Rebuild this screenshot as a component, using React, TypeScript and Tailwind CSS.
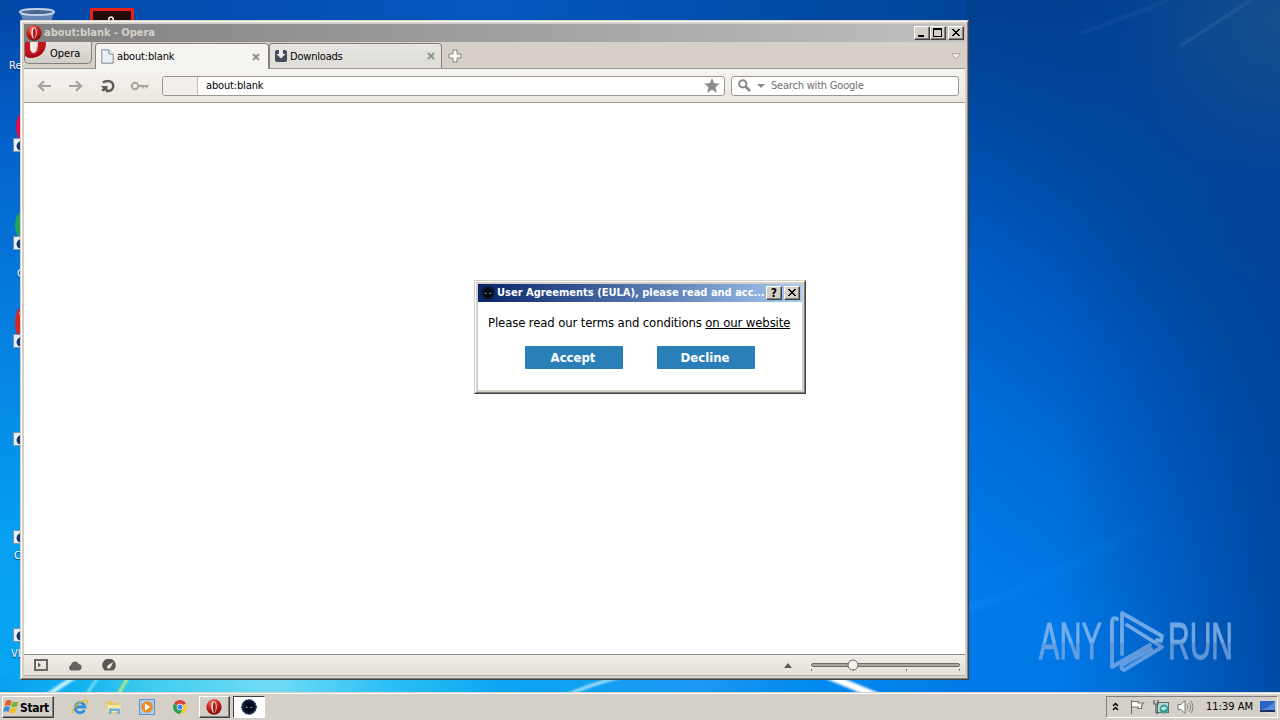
import React from 'react';

const ui = "font-['DejaVu_Sans_Condensed','DejaVu_Sans',sans-serif] [font-stretch:condensed]";

function Wallpaper() {
  return (
    <svg className="absolute inset-0" width="1280" height="720" viewBox="0 0 1280 720">
      <defs>
        <linearGradient id="base" x1="0" y1="0" x2="0" y2="1">
          <stop offset="0" stopColor="#0345a5" />
          <stop offset=".2" stopColor="#0462cc" />
          <stop offset=".5" stopColor="#0584e4" />
          <stop offset=".75" stopColor="#05a0f0" />
          <stop offset="1" stopColor="#08a8f4" />
        </linearGradient>
        <linearGradient id="right" gradientUnits="userSpaceOnUse" x1="968" y1="560" x2="1270" y2="160">
          <stop offset="0" stopColor="#0079e9" />
          <stop offset=".25" stopColor="#006cda" />
          <stop offset=".5" stopColor="#005ac2" />
          <stop offset=".8" stopColor="#00469b" />
          <stop offset="1" stopColor="#003c85" />
        </linearGradient>
        <linearGradient id="topshade" x1="0" y1="0" x2="0" y2="1">
          <stop offset="0" stopColor="#003f8f" stopOpacity=".9" />
          <stop offset=".4" stopColor="#0048a0" stopOpacity=".5" />
          <stop offset="1" stopColor="#0058b8" stopOpacity="0" />
        </linearGradient>
        <linearGradient id="edge" x1="0" y1="0" x2="1" y2="0">
          <stop offset="0" stopColor="#004a9e" stopOpacity="0" />
          <stop offset="1" stopColor="#00449c" stopOpacity=".85" />
        </linearGradient>
        <radialGradient id="corner" gradientUnits="userSpaceOnUse" cx="1280" cy="20" r="170">
          <stop offset="0" stopColor="#1b5188" stopOpacity=".8" />
          <stop offset="1" stopColor="#1b5188" stopOpacity="0" />
        </radialGradient>
        <linearGradient id="topbar" x1="0" y1="0" x2="1" y2="0">
          <stop offset="0" stopColor="#0448a8" />
          <stop offset=".3" stopColor="#0450b4" />
          <stop offset=".5" stopColor="#0458be" />
          <stop offset="1" stopColor="#00459a" />
        </linearGradient>
        <linearGradient id="bottom" x1="0" y1="0" x2="1" y2="0">
          <stop offset="0" stopColor="#06a0ee" />
          <stop offset=".08" stopColor="#12b2f0" />
          <stop offset=".15" stopColor="#3ccbee" />
          <stop offset=".28" stopColor="#72dcf6" />
          <stop offset=".4" stopColor="#2cc0f4" />
          <stop offset=".52" stopColor="#0aa6f2" />
          <stop offset=".72" stopColor="#1c98f4" />
          <stop offset=".82" stopColor="#048cf0" />
          <stop offset="1" stopColor="#007ae8" />
        </linearGradient>
        <filter id="soft"><feGaussianBlur stdDeviation="1.2" /></filter>
        <filter id="softer"><feGaussianBlur stdDeviation="4" /></filter>
      </defs>
      <rect width="1280" height="720" fill="url(#base)" />
      <rect width="970" height="22" fill="url(#topbar)" />
      <rect x="966" width="314" height="720" fill="url(#right)" />
      <rect x="966" width="314" height="260" fill="url(#topshade)" />
      <rect x="1060" width="220" height="720" fill="url(#edge)" />
      <rect x="1100" width="180" height="200" fill="url(#corner)" />
      <rect y="678" width="970" height="18" fill="url(#bottom)" />
      <path d="M1180 46L1252 0" stroke="#7aa5d0" strokeOpacity=".25" strokeWidth="2" filter="url(#soft)" />
      <path d="M1080 34L1170 0" stroke="#4c83c0" strokeOpacity=".12" strokeWidth="5" filter="url(#soft)" />
      <path d="M966 604Q1030 590 1150 520Q1090 566 966 614Z" fill="#2596ff" fillOpacity=".3" filter="url(#softer)" />
      <g filter="url(#soft)" fill="none">
        <path d="M40 700L76 676" stroke="#c8f4fc" strokeWidth="4" />
        <path d="M84 698L99 676" stroke="#a0eafa" strokeWidth="2" />
        <path d="M116 698L129 676" stroke="#b8f07a" strokeWidth="3" />
        <path d="M560 698Q590 684 625 676" stroke="#a4e2fc" strokeWidth="3" />
        <path d="M826 675L884 699" stroke="#fff" strokeWidth="7" />
      </g>
    </svg>
  );
}

function OperaO({ size = 16 }: { size?: number }) {
  return (
    <svg width={size} height={size} viewBox="0 0 16 16" className="shrink-0">
      <defs>
        <radialGradient id="opr" cx=".4" cy=".25" r=".8">
          <stop offset="0" stopColor="#f08078" />
          <stop offset=".5" stopColor="#c91d1d" />
          <stop offset="1" stopColor="#740808" />
        </radialGradient>
      </defs>
      <ellipse cx="8" cy="8" rx="7.6" ry="7.8" fill="url(#opr)" />
      <ellipse cx="8" cy="8" rx="2.7" ry="5.8" fill="#f6e8e4" />
      <ellipse cx="8.3" cy="8.2" rx="1.5" ry="5" fill="#a32020" />
    </svg>
  );
}

function MaskIcon({ size = 16 }: { size?: number }) {
  return (
    <svg width={size} height={size} viewBox="0 0 16 16" className="shrink-0">
      <circle cx="8" cy="8" r="7.2" fill="#0b1832" stroke="#142c5c" strokeWidth="1.2" strokeDasharray="2 .7" />
      <circle cx="8" cy="8" r="5" fill="#050a16" />
      <path d="M4.6 7.4l2.2.8-.5.7-1.5-.3zM11.4 7.4l-2.2.8.5.7 1.5-.3z" fill="#a8bbdd" />
    </svg>
  );
}

const bevel =
  'border border-t-white border-l-white border-r-[#404040] border-b-[#404040] shadow-[inset_-1px_-1px_0_#808080] bg-[#d4d0c8]';

function CaptionButton({ kind }: { kind: 'min' | 'max' | 'close' | 'help' }) {
  return (
    <div className={`${bevel} flex h-[14px] w-4 items-center justify-center`}>
      {kind === 'help' ? (
        <span className="font-['DejaVu_Sans',sans-serif] text-[12px] leading-none font-bold text-black">?</span>
      ) : (
        <svg width="14" height="12" viewBox="0 0 14 12" shapeRendering="crispEdges">
          {kind === 'min' && <path d="M3 8h6v2H3z" />}
          {kind === 'max' && <path d="M2 1h9v9H2zM3 3v6h7V3z" fillRule="evenodd" />}
          {kind === 'close' && <path d="M3 2h2v1h1v1h2V3h1V2h2v1h-1v1H9v1H8v1h1v1h1v1h1v1H9V8H8V7H6v1H5v1H3V8h1V7h1V6h1V5H5V4H4V3H3z" />}
        </svg>
      )}
    </div>
  );
}

function TabClose() {
  return (
    <svg width="8" height="8" viewBox="0 0 8 8">
      <path d="M1 1l6 6M7 1L1 7" stroke="#94918d" strokeWidth="2" />
    </svg>
  );
}

function TitleBar() {
  return (
    <div className="flex h-[18px] items-center bg-linear-to-r from-[#808080] to-[#c0c0c0] pr-[1px] pl-[2px]">
      <OperaO />
      <span className="ml-[2px] pt-px text-[11px] font-bold tracking-[-0.05px] text-[#d4d0c8]">about:blank - Opera</span>
      <div className="ml-auto flex">
        <CaptionButton kind="min" />
        <CaptionButton kind="max" />
        <div className="w-[2px]" />
        <CaptionButton kind="close" />
      </div>
    </div>
  );
}

function TabBar() {
  return (
    <div className="flex h-[27px] border-b border-[#999590] bg-[#d6d0c9]">
      <div className="mr-[3px] flex h-[22px] w-[68px] items-center rounded-b-[5px] border border-t-0 border-[#84817c] bg-linear-to-b from-[#e6e3df] to-[#d0ccc6]">
        <svg width="22" height="18" viewBox="0 0 22 18" className="-mt-[3px] shrink-0">
          <path d="M0 0H5V5Q5 11 9 11Q13 11 13 0H21Q21 15 6 16Q2 16 0 14Z" fill="#c4161e" />
          <path d="M5 0h6q0 10-3 10T5 0" fill="#f5e9e6" />
          <path d="M1 11Q10 18 20 3Q18 15 5 16Q1 15 1 11" fill="#9d0d16" />
        </svg>
        <span className="ml-[3px] pt-[3px] text-[11px] text-black">Opera</span>
      </div>
      <div className="relative z-10 mt-px -mb-px flex h-[26px] w-[174px] items-center rounded-t-[4px] border border-b-0 border-[#85827c] bg-[#f6f4f0] pr-[8px] pl-[5px]">
        <svg width="13" height="15" viewBox="0 0 13 15">
          <path d="M.8.8H8L12.2 5V14.2H.8Z" fill="#eaf0f7" stroke="#7d8794" />
          <path d="M8 .8V5H12.2" fill="#fff" stroke="#7d8794" />
        </svg>
        <span className="ml-[3px] pt-[2px] text-[11px] tracking-[-0.15px] text-black">about:blank</span>
        <span className="ml-auto"><TabClose /></span>
      </div>
      <div className="mt-px flex h-[25px] w-[173px] items-center rounded-t-[4px] border border-b-0 border-[#85827c] bg-linear-to-b from-[#e7e5e1] to-[#dedcd7] pr-[6px] pl-[5px]">
        <svg width="12" height="12" viewBox="0 0 12 12">
          <rect width="12" height="12" rx="2" fill="#454c5c" />
          <path d="M4 0h4v4h2.5L6 8.6 1.5 4H4z" fill="#eeeeec" />
        </svg>
        <span className="ml-[3px] pt-[2px] text-[11px] tracking-[-0.2px] text-black">Downloads</span>
        <span className="ml-auto"><TabClose /></span>
      </div>
      <svg width="14" height="14" viewBox="0 0 14 14" className="mt-[7px] ml-[6px]">
        <path d="M5 1h4v4h4v4H9v4H5V9H1V5h4z" fill="#fbfaf8" stroke="#85827c" />
      </svg>
      <svg width="10" height="7" viewBox="0 0 10 7" className="mt-[11px] mr-[4px] ml-auto">
        <path d="M.8 1.5L2 .7h6l1.2.8L5 5.8z" fill="#f2f0ed" stroke="#a09c96" />
      </svg>
    </div>
  );
}

function Toolbar() {
  return (
    <div className="flex h-[34px] items-center border-b border-[#9c9893] bg-linear-to-b from-[#f6f4f0] to-[#ebe6df] pr-[6px] pl-[13px]">
      <svg width="15" height="12" viewBox="0 0 15 12" className="mr-[16px]">
        <path d="M14 6H3M7 1.2L2 6l5 4.8" fill="none" stroke="#a6a29d" strokeWidth="2.2" />
      </svg>
      <svg width="15" height="12" viewBox="0 0 15 12" className="mr-[17px]">
        <path d="M1 6h11M8 1.2L13 6l-5 4.8" fill="none" stroke="#a6a29d" strokeWidth="2.2" />
      </svg>
      <svg width="15" height="14" viewBox="0 0 15 14" className="mr-[15px]">
        <path d="M3 3.4Q5 2 8 2A5 5 0 0 1 8.500 12H6" fill="none" stroke="#5e5c59" strokeWidth="2.5" />
        <path d="M1 7H7.500V13.500L5.400 11.400 3 12.500 1.200 11 3.200 9.200z" fill="#5e5c59" />
      </svg>
      <svg width="19" height="10" viewBox="0 0 19 10" className="mr-[13px]">
        <circle cx="5" cy="5" r="3.2" fill="none" stroke="#aaa6a0" strokeWidth="2" />
        <path d="M8 5h10.500" stroke="#aaa6a0" strokeWidth="2.200" />
        <path d="M13 5v2.500M16.500 5v2.500" stroke="#aaa6a0" strokeWidth="1.500" />
      </svg>
      <div className="mr-[6px] flex h-5 w-[563px] items-center overflow-hidden rounded-[3px] border border-[#9a9690] bg-white">
        <div className="h-full w-[35px] border-r border-[#c3beb8] bg-[#f3eeea]" />
        <span className="ml-[8px] pt-px text-[11px] tracking-[-0.15px] text-black">about:blank</span>
        <svg width="16" height="15" viewBox="0 0 16 15" className="mr-[4px] ml-auto">
          <path d="M8 0l2.2 5.2 5.6.4-4.3 3.6 1.4 5.5L8 11.7l-4.9 3 1.400-5.5L.2 5.600l5.600-.4z" fill="#8f8c89" />
        </svg>
      </div>
      <div className="flex h-5 flex-1 items-center rounded-[3px] border border-[#9a9690] bg-white pl-[6px]">
        <svg width="13" height="13" viewBox="0 0 13 13">
          <circle cx="4.8" cy="4.8" r="3.6" fill="none" stroke="#8b8885" strokeWidth="2" />
          <path d="M7.5 7.5l4.5 4.5" stroke="#8b8885" strokeWidth="2.6" />
        </svg>
        <svg width="8" height="4" viewBox="0 0 8 4" className="ml-[6px]"><path d="M0 0h8L4 4z" fill="#8b8885" /></svg>
        <span className="ml-[6px] pt-px text-[11px] tracking-[-0.2px] text-[#6f6f6f]">Search with Google</span>
      </div>
    </div>
  );
}

function StatusBar() {
  return (
    <div className="flex h-[22px] items-center border-t border-b border-t-[#8d8983] border-b-[#b5b0a8] bg-linear-to-b from-[#f1ede8] to-[#e5dfd7] pr-[4px] pl-[10px]">
      <svg width="14" height="12" viewBox="0 0 14 12" className="mr-[20px]">
        <rect x="1" y="1" width="12" height="10" fill="none" stroke="#5d5a56" strokeWidth="1.8" />
        <path d="M4 3.4L7 6 4 8.6z" fill="#5d5a56" />
      </svg>
      <svg width="14" height="11" viewBox="0 0 14 11" className="mr-[20px]">
        <path d="M3 10.5a3 3 0 0 1 0-5.6A4 4 0 0 1 10.6 4a3.3 3.3 0 0 1 .4 6.5z" fill="#64615e" />
      </svg>
      <svg width="14" height="12" viewBox="0 0 14 12">
        <path d="M2.6 11.5A6.8 6.8 0 1 1 11.4 11.5z" fill="#5d5a56" />
        <path d="M11.2 3L8.6 8.4A1.8 1.8 0 1 1 6 6.3z" fill="#eee9e3" />
      </svg>
      <svg width="8" height="5" viewBox="0 0 8 5" className="mr-[18px] ml-auto"><path d="M4 0l4 5H0z" fill="#5d5a56" /></svg>
      <svg width="151" height="16" viewBox="0 0 151 16">
        <rect x="1.5" y="6.500" width="148" height="3" rx="1.5" fill="#aaa69f" stroke="#706c66" />
        <path d="M1.5 12v2M43.500 12v2M96.500 12v2M149.500 12v2" stroke="#77736d" />
        <circle cx="43" cy="8" r="5" fill="#f3f1ee" stroke="#6e6b67" />
      </svg>
    </div>
  );
}

function BrowserWindow() {
  return (
    <div className="absolute top-5 left-5 h-[660px] w-[949px] border border-t-[#d4d0c8] border-r-[#404040] border-b-[#404040] border-l-[#d4d0c8] bg-[#d4d0c8]">
      <div className="flex h-full flex-col border border-t-white border-r-[#808080] border-b-[#808080] border-l-white p-[2px]">
        <TitleBar />
        <TabBar />
        <Toolbar />
        <div className="flex-1 bg-white" />
        <StatusBar />
      </div>
    </div>
  );
}

function EulaDialog() {
  return (
    <div className="absolute top-[280px] left-[474px] h-[114px] w-[332px] border border-t-[#d4d0c8] border-r-[#404040] border-b-[#404040] border-l-[#d4d0c8] bg-[#d4d0c8]">
      <div className="flex h-full flex-col border border-t-white border-r-[#808080] border-b-[#808080] border-l-white p-[2px]">
        <div className="flex h-[18px] items-center bg-linear-to-r from-[#0a246a] to-[#a6caf0] pr-[2px] pl-[2px]">
          <MaskIcon />
          <span className="ml-[1px] pt-px text-[11px] font-bold whitespace-nowrap text-white">User Agreements (EULA), please read and acc...</span>
          <div className="ml-auto flex gap-[2px]">
            <CaptionButton kind="help" />
            <CaptionButton kind="close" />
          </div>
        </div>
        <div className="flex-1 bg-white pt-[13px]">
          <p className="ml-[10px] text-[13px] leading-[16px] tracking-[-0.125px] whitespace-nowrap text-black">
            Please read our terms and conditions <span className="underline">on our website</span>
          </p>
          <div className="mt-[15px] flex gap-[34px] pl-[47px]">
            {['Accept', 'Decline'].map((label) => (
              <button key={label} className="h-[23px] w-[98px] rounded-[1px] bg-[#2980b9] pt-px pr-[2px] text-[13px] font-bold text-white">
                {label}
              </button>
            ))}
          </div>
        </div>
      </div>
    </div>
  );
}

function Watermark() {
  return (
    <svg className="absolute top-[605px] left-[1034px]" width="212" height="70" viewBox="0 0 212 70" opacity=".72">
      <defs>
        <linearGradient id="wm" gradientUnits="userSpaceOnUse" x1="0" y1="0" x2="0" y2="70">
          <stop offset="0" stopColor="#8fbdf2" />
          <stop offset=".53" stopColor="#a5c6ee" />
          <stop offset=".55" stopColor="#86abdd" />
          <stop offset="1" stopColor="#86b4ee" />
        </linearGradient>
      </defs>
      <g fill="url(#wm)" stroke="url(#wm)" strokeWidth="1" fontFamily="'Liberation Sans Narrow','Liberation Sans',sans-serif" fontSize="52">
        <text x="5" y="54" textLength="63" lengthAdjust="spacingAndGlyphs">ANY</text>
        <text x="134" y="54" textLength="65" lengthAdjust="spacingAndGlyphs">RUN</text>
      </g>
      <g fill="none" stroke="url(#wm)" strokeWidth="3.8" strokeLinejoin="round" strokeLinecap="round">
        <path d="M83 14Q78 11 78 18V62L116 40" />
        <path d="M88 49V8L128 31L127 36L123 35" />
        <path d="M93 20L128 42L90 65Q86 64 88 60L117 44" />
      </g>
    </svg>
  );
}

function Shortcut() {
  return (
    <svg width="11" height="14" viewBox="0 0 11 14">
      <rect x=".5" y=".5" width="10" height="13" fill="#e7edf4" stroke="#7b93ad" />
      <path d="M9 2Q2 5 4 10Q5 13 8 12V7H11V2z" fill="#16386f" />
    </svg>
  );
}

function Desktop() {
  const arrows = ['top-[138px]', 'top-[236px]', 'top-[334px]', 'top-[432px]', 'top-[530px]', 'top-[628px]'];
  return (
    <div className="absolute inset-0 text-[11px] text-white [text-shadow:0_1px_1px_#00285a]">
      <svg className="absolute top-[8px] left-[19px]" width="36" height="14" viewBox="0 0 36 14">
        <path d="M1 4L4 14H32L35 4Z" fill="#7590b8" fillOpacity=".85" />
        <ellipse cx="18" cy="4" rx="17" ry="3" fill="#46688e" stroke="#bed2e4" strokeWidth="2" />
      </svg>
      <svg className="absolute top-[8px] left-[90px]" width="44" height="14" viewBox="0 0 44 14">
        <path d="M0 0H44V14H0z" fill="#e62415" />
        <path d="M3 3H41V14H3z" fill="#260a0c" />
        <path d="M19 14Q18 9 21 9T23 14" fill="none" stroke="#fff" strokeWidth="1.5" />
      </svg>
      <svg className="absolute top-[110px] left-[14px]" width="10" height="235" viewBox="0 0 10 235">
        <ellipse cx="9" cy="17" rx="7" ry="14" fill="#e50a4b" />
        <ellipse cx="8" cy="115" rx="7" ry="13" fill="#24a455" />
        <ellipse cx="8" cy="213" rx="7" ry="16" fill="#d32522" />
        <path d="M5 203l4-6v18z" fill="#f2a69d" />
      </svg>
      {arrows.map((top) => (
        <div key={top} className={`absolute left-[13px] ${top}`}><Shortcut /></div>
      ))}
      <span className="absolute top-[59px] left-[9px] leading-[13px]">Re</span>
      <span className="absolute top-[267px] left-[17px] leading-[13px]">G</span>
      <span className="absolute top-[549px] left-[14px] leading-[13px]">C</span>
      <span className="absolute top-[647px] left-[11px] leading-[13px]">VL</span>
    </div>
  );
}

function QuickIcons() {
  return (
    <>
      <svg width="16" height="16" viewBox="0 0 16 16">
        <path d="M12.500 11A5 5 0 1 1 13 8H4" fill="none" stroke="#2f8fd8" strokeWidth="2.800" />
        <path d="M1 14.500Q-1 10 6 5T15 1.500Q16 3 13.500 5.500" fill="none" stroke="#e9b92e" strokeWidth="1.500" />
      </svg>
      <svg width="16" height="16" viewBox="0 0 16 16">
        <path d="M1 2h6l1 2h6v10H1z" fill="#e6c766" />
        <path d="M1.500 6h13v7h-13z" fill="#f8e9a9" />
        <path d="M3 15V9.500h11V15h-2.500v-3h-6v3z" fill="#69b2de" />
      </svg>
      <svg width="16" height="16" viewBox="0 0 16 16">
        <rect x=".5" y=".5" width="15" height="15" fill="#a9cdee" stroke="#5f93ca" />
        <circle cx="8" cy="8" r="5.800" fill="#f18a1c" />
        <path d="M6 4.500L11.500 8 6 11.500z" fill="#fff" />
      </svg>
      <svg width="14" height="14" viewBox="0 0 16 16">
        <path d="M8 8L1.100 4A8 8 0 0 1 14.900 4z" fill="#dc4437" />
        <path d="M8 8L1.100 4A8 8 0 0 0 8 16l3.500-6z" fill="#2da04f" />
        <path d="M8 8L14.900 4A8 8 0 0 1 8 16l3.500-6z" fill="#fbc934" />
        <circle cx="8" cy="8" r="3.700" fill="#f5f5f5" />
        <circle cx="8" cy="8" r="2.900" fill="#4285f4" />
      </svg>
    </>
  );
}

function Taskbar() {
  return (
    <div className="absolute bottom-0 left-0 flex h-[28px] w-full items-start border-t border-[#d4d0c8] bg-[#d4d0c8] shadow-[inset_0_1px_0_#fff]">
      <div className={`${bevel} mt-[3px] ml-[2px] flex h-[22px] w-[52px] items-center`}>
        <svg width="17" height="16" viewBox="0 0 17 16" className="shrink-0">
          <path d="M3 2q3-2 5.500 0L7.200 7q-2.500-1.500-5.500 0z" fill="#e65a28" />
          <path d="M9.400 2.600q3 1.500 6 0L14 7.600q-3 1.500-6 0z" fill="#78b63c" />
          <path d="M1.500 8q3-1.600 5.400 0L5.500 13q-2.500-1.600-5.400 0z" fill="#348cd8" />
          <path d="M7.700 8.600q3 1.500 6 0L12.300 13.600q-3 1.500-6 0z" fill="#f3bd24" />
        </svg>
        <span className="pt-px text-[12px] font-bold tracking-[-0.03em] text-black">Start</span>
      </div>
      <div className="mt-[6px] ml-[18px] flex items-center gap-[17.5px]"><QuickIcons /></div>
      <div className={`${bevel} mt-[3px] ml-[12px] flex h-[22px] w-[31px] items-center justify-center`}><OperaO /></div>
      <div className="mt-[3px] ml-[3px] flex h-[22px] w-[32px] items-center justify-center border border-t-[#404040] border-r-white border-b-white border-l-[#404040] bg-white"><MaskIcon /></div>
      <div className="mt-[3px] mr-[2px] ml-auto flex h-[22px] w-[172px] items-center border border-t-[#808080] border-r-white border-b-white border-l-[#808080] pl-[5px]">
        <svg width="7" height="9" viewBox="0 0 7 9" className="mr-[10px] -mt-[2px]"><path d="M1 4l2.500-2.500L6 4M1 8l2.500-2.500L6 8" fill="none" stroke="#000" strokeWidth="1.500" /></svg>
        <svg width="17" height="16" viewBox="0 0 17 16" className="mr-[7px]">
          <path d="M2.500 1v14M3 2.500h6v1.500h5.500l-2 2.500v3H9V8H3" fill="#fff" stroke="#77746f" strokeWidth="1.200" />
        </svg>
        <svg width="17" height="16" viewBox="0 0 17 16" className="mr-[7px]">
          <rect x="4.500" y="3.500" width="11" height="10" fill="#b9dcd6" stroke="#5c6d6c" />
          <circle cx="11" cy="10" r="4.500" fill="#3b9e93" />
          <path d="M8 9q3-3 6 0-3 3-5 2" fill="#b5e5dc" />
          <path d="M1 1v4h4V1M3 5v9h3" fill="none" stroke="#555" strokeWidth="1.200" />
        </svg>
        <svg width="17" height="16" viewBox="0 0 17 16" className="mr-[12px]">
          <path d="M1 5.500h3L8 1.500v13l-4-4H1z" fill="#fff" stroke="#77746f" />
          <path d="M10 5.500q2 2.500 0 5M12 3.500q3.500 4.500 0 9M14 2q4 6 0 12" fill="none" stroke="#85827d" />
        </svg>
        <span className="pt-px text-[11px] whitespace-nowrap text-black">11:39 AM</span>
        <svg width="16" height="13" viewBox="0 0 16 13" className="mr-[1px] ml-auto shrink-0">
          <path d="M0 0h15v9H0z" fill="#2a62c0" />
          <path d="M0 9Q9 7 15 0v9z" fill="#4f8ce0" />
          <path d="M0 9h15v2H0z" fill="#1b2e58" />
          <path d="M6 11h7v2H6z" fill="#dedbd6" />
        </svg>
      </div>
    </div>
  );
}

export default function App() {
  return (
    <main className={`relative h-[720px] w-[1280px] overflow-hidden ${ui}`}>
      <Wallpaper />
      <Desktop />
      <Watermark />
      <BrowserWindow />
      <EulaDialog />
      <Taskbar />
    </main>
  );
}
